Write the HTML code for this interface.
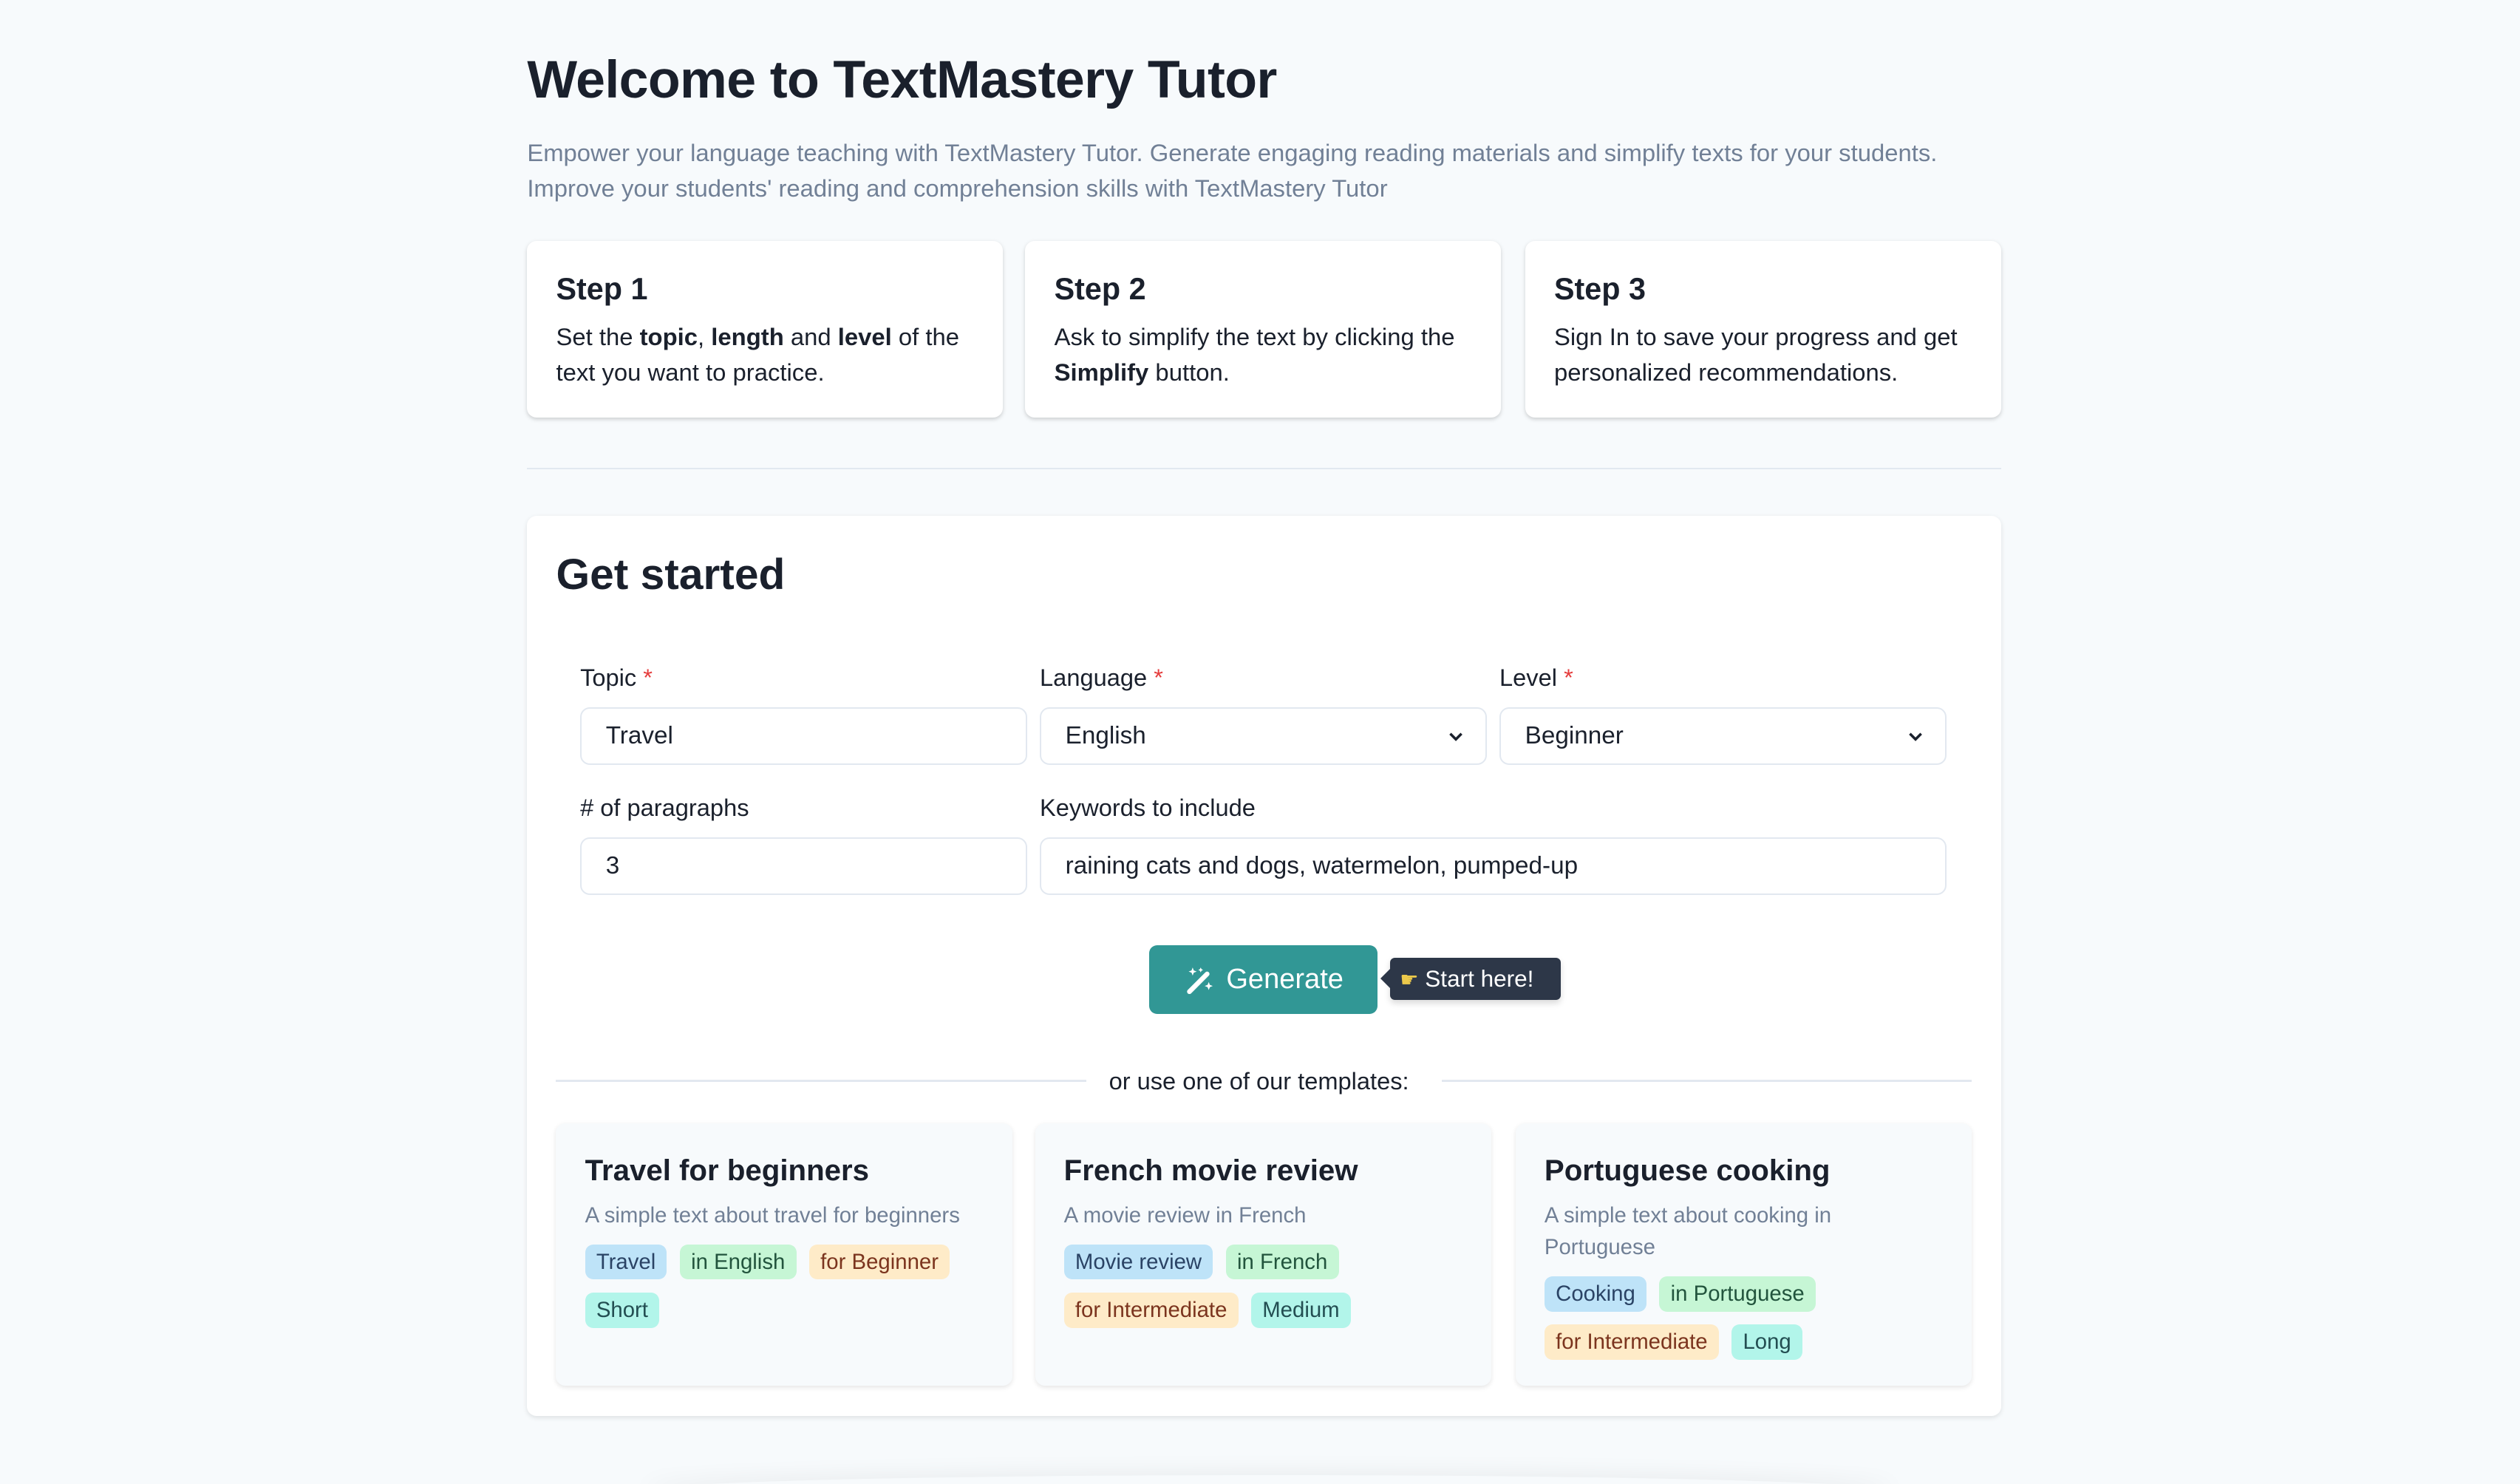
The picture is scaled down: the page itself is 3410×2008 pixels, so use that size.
<!DOCTYPE html>
<html><head><meta charset="utf-8"><style>
html,body{margin:0;padding:0;background:#f7fafc;overflow:hidden}
body{width:3410px;height:2008px}
#w{zoom:2.17474;width:1568px;height:923px;position:relative;font-family:"Liberation Sans",sans-serif;color:#1a202c}
.a{position:absolute}
h1{position:absolute;left:328px;top:31px;margin:0;font-size:33px;font-weight:700;letter-spacing:-0.3px}
.sub{left:328px;top:84px;font-size:15.1px;line-height:22px;color:#718096;width:920px}
.step{background:#fff;border-radius:6px;box-shadow:0 1px 3px rgba(0,0,0,.12),0 1px 2px rgba(0,0,0,.06);top:150px;width:296px;height:110px;box-sizing:border-box;padding:18px}
.step b.t{display:block;font-size:19px;margin-bottom:8px;margin-top:1px}
.step p{margin:0;font-size:15.1px;line-height:22px;color:#1a202c}
.main{left:328px;top:321px;width:917px;height:560px;background:#fff;border-radius:6px;box-shadow:0 1px 3px rgba(0,0,0,.1)}
.lbl{font-size:15px;font-weight:500;color:#1a202c}
.lbl i{color:#e53e3e;font-style:normal}
.in{height:36px;box-sizing:border-box;border:1px solid #e2e8f0;border-radius:6px;padding:0 15px;line-height:34px;font-size:15.3px;color:#1a202c;background:#fff}
.chev{position:absolute;right:12px;top:11px}
.tc{background:#f7fafc;border-radius:6px;box-shadow:0 1px 3px rgba(0,0,0,.1);top:699px;width:284px;height:163px;box-sizing:border-box;padding:18px}
.tc b{display:block;font-size:18.5px;margin-top:1px}
.tc .d{font-size:13.5px;color:#718096;line-height:20px;margin-top:7px}
.tags{margin-top:8px;display:flex;flex-wrap:wrap;gap:8px 8px}
.tg{height:22px;line-height:22px;border-radius:5px;padding:0 7px;font-size:13.5px}
.bl{background:#bee3f8;color:#2a4365}.gr{background:#c6f6d5;color:#22543d}.or{background:#feebc8;color:#7b341e}.tl{background:#b2f5ea;color:#234e52}
</style></head><body><div id="w">
<h1>Welcome to TextMastery Tutor</h1>
<div class="a sub">Empower your language teaching with TextMastery Tutor. Generate engaging reading materials and simplify texts for your students. Improve your students' reading and comprehension skills with TextMastery Tutor</div>
<div class="a step" style="left:328px"><b class="t">Step 1</b><p>Set the <b>topic</b>, <b>length</b> and <b>level</b> of the text you want to practice.</p></div>
<div class="a step" style="left:638px"><b class="t">Step 2</b><p>Ask to simplify the text by clicking the <b>Simplify</b> button.</p></div>
<div class="a step" style="left:949px"><b class="t">Step 3</b><p>Sign In to save your progress and get personalized recommendations.</p></div>
<div class="a" style="left:328px;top:291px;width:917px;height:1px;background:#e2e8f0"></div>
<div class="a main"></div>
<div class="a" style="left:346px;top:342px;font-size:27px;font-weight:700">Get started</div>
<div class="a lbl" style="left:361px;top:413px">Topic <i>*</i></div>
<div class="a lbl" style="left:647px;top:413px">Language <i>*</i></div>
<div class="a lbl" style="left:933px;top:413px">Level <i>*</i></div>
<div class="a in" style="left:361px;top:440px;width:278px">Travel</div>
<div class="a in" style="left:647px;top:440px;width:278px">English<svg class="chev" width="12" height="12" viewBox="0 0 12 12"><path d="M2.5 4.5L6 8l3.5-3.5" fill="none" stroke="#1a202c" stroke-width="1.6"/></svg></div>
<div class="a in" style="left:933px;top:440px;width:278px">Beginner<svg class="chev" width="12" height="12" viewBox="0 0 12 12"><path d="M2.5 4.5L6 8l3.5-3.5" fill="none" stroke="#1a202c" stroke-width="1.6"/></svg></div>
<div class="a lbl" style="left:361px;top:494px">#&nbsp;of paragraphs</div>
<div class="a lbl" style="left:647px;top:494px">Keywords to include</div>
<div class="a in" style="left:361px;top:521px;width:278px">3</div>
<div class="a in" style="left:647px;top:521px;width:564px">raining cats and dogs, watermelon, pumped-up</div>
<div class="a" style="left:715px;top:588px;width:142px;height:43px;background:#319795;border-radius:5px;color:#fff;font-size:17.5px;line-height:43px;font-weight:500">
<svg class="a" style="left:22px;top:13px" width="18" height="18" viewBox="0 0 18 18"><path d="M3 16L14 5" stroke="#fff" stroke-width="3" stroke-linecap="round"/><path d="M5 1l.7 1.8L7.5 3.5l-1.8.7L5 6l-.7-1.8L2.5 3.5l1.8-.7zM10 1l.5 1 1 .5-1 .5-.5 1-.5-1-1-.5 1-.5zM15 10l.7 1.8 1.8.7-1.8.7L15 15l-.7-1.8-1.8-.7 1.8-.7z" fill="#fff"/></svg>
<span class="a" style="left:48px;top:0">Generate</span></div>
<div class="a" style="left:865px;top:596px;width:106px;height:26px;background:#2d3748;border-radius:3px;color:#fff;font-size:14.5px;line-height:26px;box-shadow:0 2px 4px rgba(0,0,0,.15)"><span style="position:absolute;left:-6px;top:7px;border:6px solid transparent;border-left:0;border-right-color:#2d3748;width:0;height:0"></span><span style="padding-left:6px;font-family:'DejaVu Sans',sans-serif;color:#ecc94b;font-size:13px">☛</span> Start here!</div>
<div class="a" style="left:346px;top:672px;width:330px;height:1px;background:#e2e8f0"></div>
<div class="a" style="left:897px;top:672px;width:330px;height:1px;background:#e2e8f0"></div>
<div class="a" style="left:690px;top:664px;font-size:15px;color:#1a202c">or use one of our templates:</div>
<div class="a tc" style="left:346px"><b>Travel for beginners</b><div class="d">A simple text about travel for beginners</div><div class="tags"><span class="tg bl">Travel</span><span class="tg gr">in English</span><span class="tg or">for Beginner</span><span class="tg tl">Short</span></div></div>
<div class="a tc" style="left:644px"><b>French movie review</b><div class="d">A movie review in French</div><div class="tags"><span class="tg bl">Movie review</span><span class="tg gr">in French</span><span class="tg or">for Intermediate</span><span class="tg tl">Medium</span></div></div>
<div class="a tc" style="left:943px"><b>Portuguese cooking</b><div class="d" style="width:200px">A simple text about cooking in Portuguese</div><div class="tags"><span class="tg bl">Cooking</span><span class="tg gr">in Portuguese</span><span class="tg or">for Intermediate</span><span class="tg tl">Long</span></div></div>
<div class="a" style="left:400px;top:918px;width:780px;height:20px;border-radius:50%;box-shadow:0 -2px 14px rgba(0,0,0,.06)"></div>
</div></body></html>
